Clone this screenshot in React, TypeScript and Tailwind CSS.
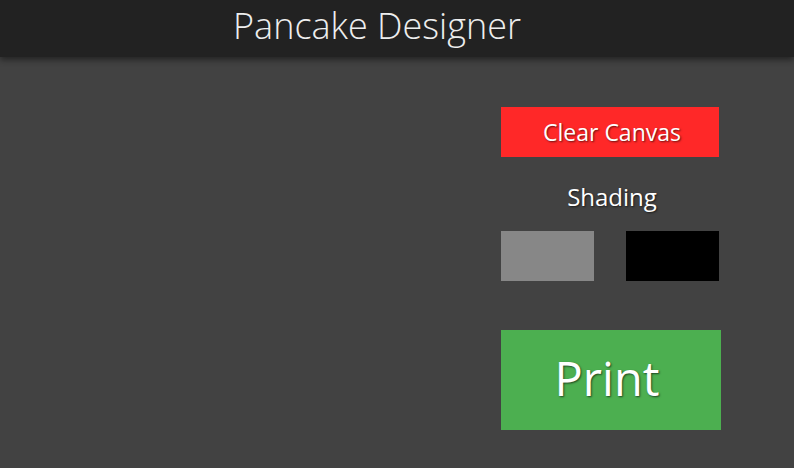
export default function App() {
  return (
    <div className="w-[794px] h-[468px] bg-[#424242] flex flex-col overflow-hidden" style={{ fontFamily: '"Open Sans", "Noto Sans", sans-serif' }}>
      <header className="h-[57px] bg-[#222222] shadow-[0_3px_6px_rgba(0,0,0,0.45)] flex items-center relative z-10">
        <h1 className="w-[754px] text-center text-[36px] font-light text-[#eeeeee] leading-none -mt-[5px]">Pancake Designer</h1>
      </header>

      <div className="flex flex-1">
        <div className="flex-1" />
        <div className="w-[220px] mr-[73px] mt-[50px] flex flex-col">
          <button className="w-[218px] h-[50px] pl-[4px] bg-[#ff2828] text-white text-[23px] leading-none [text-shadow:1px_1px_2px_rgba(0,0,0,0.6)]">
            Clear Canvas
          </button>
          <div className="w-[218px] mt-[24px] h-[32px] pl-[4px] flex items-center justify-center text-white text-[24px] [text-shadow:1px_1px_2px_rgba(0,0,0,0.6)]">
            Shading
          </div>
          <div className="w-[218px] mt-[18px] flex justify-between">
            <button className="w-[93px] h-[50px] bg-[#878787]" />
            <button className="w-[93px] h-[50px] bg-black" />
          </div>
          <button className="mt-[49px] w-[220px] h-[100px] pr-[8px] pb-[4px] bg-[#4caf50] text-white text-[47px] [text-shadow:1px_1px_2px_rgba(0,0,0,0.6)]">
            Print
          </button>
        </div>
      </div>
    </div>
  );
}
